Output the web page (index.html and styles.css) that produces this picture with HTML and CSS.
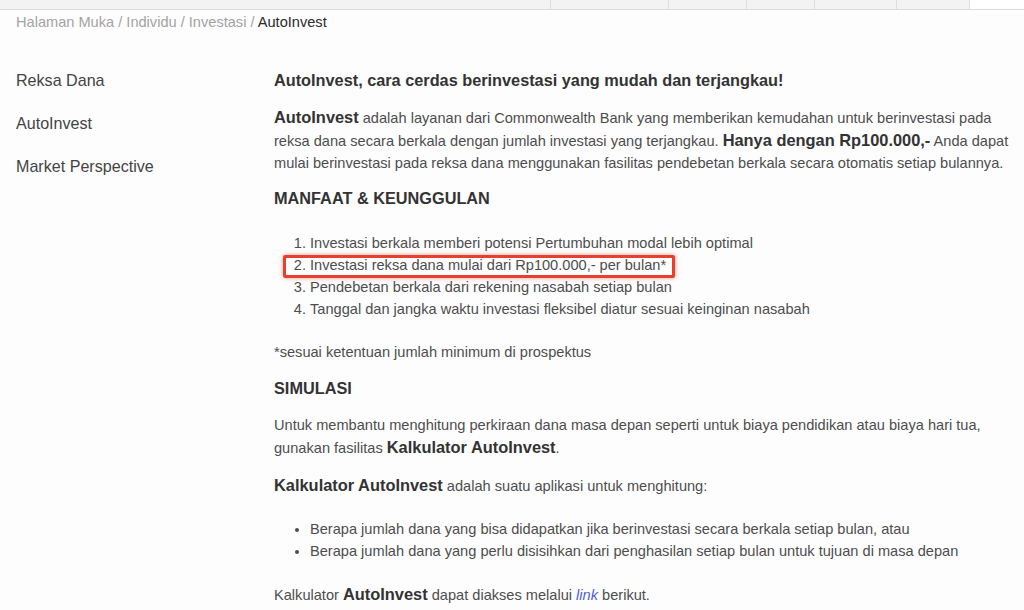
FILE: index.html
```html
<!DOCTYPE html>
<html lang="id">
<head>
<meta charset="utf-8">
<title>AutoInvest</title>
<link rel="stylesheet" href="styles.css">
</head>
<body>
<div class="topbar">
  <div class="tab tab-first"></div>
  <div class="tab" style="width:118px"></div>
  <div class="tab" style="width:78px"></div>
  <div class="tab" style="width:68px"></div>
  <div class="tab" style="width:82px"></div>
  <div class="tab" style="width:73px"></div>
  <div class="tab tab-active"></div>
</div>
<div class="breadcrumb">
  <span class="crumb">Halaman Muka</span> / <span class="crumb">Individu</span> / <span class="crumb">Investasi</span> / <span class="crumb-current">AutoInvest</span>
</div>
<div class="layout">
  <nav class="sidebar">
    <div class="side-item">Reksa Dana</div>
    <div class="side-item">AutoInvest</div>
    <div class="side-item">Market Perspective</div>
  </nav>
  <main class="content">
    <h1 class="title">AutoInvest, cara cerdas berinvestasi yang mudah dan terjangkau!</h1>
    <p class="para intro"><b class="big">AutoInvest</b> adalah layanan dari Commonwealth Bank yang memberikan kemudahan untuk berinvestasi pada reksa dana secara berkala dengan jumlah investasi yang terjangkau. <b class="big">Hanya dengan Rp100.000,-</b> Anda dapat mulai berinvestasi pada reksa dana menggunakan fasilitas pendebetan berkala secara otomatis setiap bulannya.</p>
    <h2 class="section">MANFAAT &amp; KEUNGGULAN</h2>
    <ol class="list numbered">
      <li>Investasi berkala memberi potensi Pertumbuhan modal lebih optimal</li>
      <li class="marked">Investasi reksa dana mulai dari Rp100.000,- per bulan*</li>
      <li>Pendebetan berkala dari rekening nasabah setiap bulan</li>
      <li>Tanggal dan jangka waktu investasi fleksibel diatur sesuai keinginan nasabah</li>
    </ol>
    <p class="para note">*sesuai ketentuan jumlah minimum di prospektus</p>
    <h2 class="section">SIMULASI</h2>
    <p class="para">Untuk membantu menghitung perkiraan dana masa depan seperti untuk biaya pendidikan atau biaya hari tua, gunakan fasilitas <b class="big">Kalkulator AutoInvest</b>.</p>
    <p class="para"><b class="big">Kalkulator AutoInvest</b> adalah suatu aplikasi untuk menghitung:</p>
    <ul class="list bullets">
      <li>Berapa jumlah dana yang bisa didapatkan jika berinvestasi secara berkala setiap bulan, atau</li>
      <li>Berapa jumlah dana yang perlu disisihkan dari penghasilan setiap bulan untuk tujuan di masa depan</li>
    </ul>
    <p class="para">Kalkulator <b class="big">AutoInvest</b> dapat diakses melalui <a class="link" href="#">link</a> berikut.</p>
  </main>
</div>
</body>
</html>
```
FILE: styles.css
```css
html, body {
  margin: 0;
  padding: 0;
  background: #fdfdfd;
}
body {
  font-family: "Liberation Sans", Arial, sans-serif;
  color: #4d4d4d;
  font-size: 14.6px;
  line-height: 22px;
  overflow: hidden;
}
.topbar {
  display: flex;
  height: 9px;
  background: #f3f3f3;
  border-bottom: 1px solid #dcdcdc;
}
.tab {
  height: 9px;
  border-left: 1px solid #dedede;
  box-sizing: border-box;
}
.tab-first {
  width: 550px;
  border-left: none;
}
.tab-active {
  flex: 1;
  background: #ffffff;
}
.breadcrumb {
  padding: 2px 16px 0;
  line-height: 20px;
  font-size: 14.6px;
  color: #a3a3a3;
}
.crumb-current {
  color: #2a2a2a;
}
.layout {
  display: flex;
  margin-top: 37px;
}
.sidebar {
  width: 258px;
  padding-left: 16px;
  flex: none;
}
.side-item {
  font-size: 16.1px;
  line-height: 22px;
  height: 22px;
  margin-bottom: 21px;
  color: #444444;
}
.content {
  width: 736px;
  flex: none;
}
.title {
  margin: 0 0 15px;
  font-size: 16.3px;
  line-height: 22px;
  font-weight: bold;
  color: #333333;
}
.para {
  margin: 0 0 15px;
}
.intro {
  margin-bottom: 13px;
}
.note {
  margin-bottom: 14px;
}
.big {
  font-size: 16.4px;
  color: #333333;
}
.section {
  margin: 0 0 15px;
  font-size: 16.3px;
  line-height: 22px;
  font-weight: bold;
  color: #333333;
}
.list {
  margin: 22px 0 21px;
  padding-left: 36px;
}
.numbered {
  margin-top: 23px;
}
.bullets {
  list-style: disc;
  margin-top: 21px;
}
.marked {
  position: relative;
}
.marked::after {
  content: "";
  position: absolute;
  left: -27px;
  top: 1px;
  width: 386px;
  height: 17px;
  border: 3px solid #e8402f;
  border-radius: 2px;
  box-shadow: 0 0 4px rgba(232, 64, 47, 0.55);
}
.link {
  color: #4f5fd6;
  font-style: italic;
  text-decoration: none;
}
```
